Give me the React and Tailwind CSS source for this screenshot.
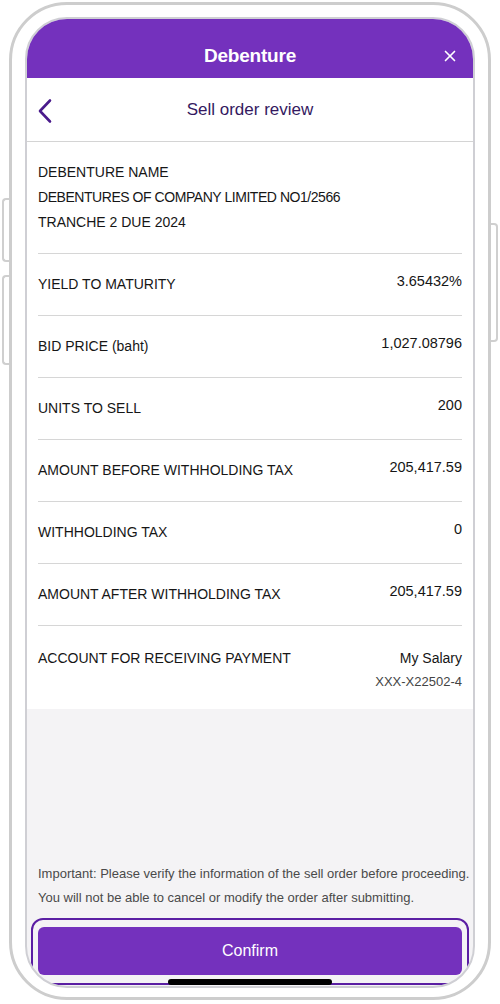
import { X } from 'lucide-react';

const rows = [
  { label: 'YIELD TO MATURITY', value: '3.65432%' },
  { label: 'BID PRICE (baht)', value: '1,027.08796' },
  { label: 'UNITS TO SELL', value: '200' },
  { label: 'AMOUNT BEFORE WITHHOLDING TAX', value: '205,417.59' },
  { label: 'WITHHOLDING TAX', value: '0' },
  { label: 'AMOUNT AFTER WITHHOLDING TAX', value: '205,417.59' },
];

const App = () => {
  return (
    <div className="w-[500px] h-[1004px] bg-white relative overflow-hidden font-['Liberation_Sans',Arial,sans-serif] text-[#161616]">
      {/* side buttons */}
      <div className="absolute left-[2px] top-[198px] w-[10px] h-[64px] border-2 border-r-0 border-[#cfcfcf] rounded-l-[4px] bg-white" />
      <div className="absolute left-[2px] top-[275px] w-[10px] h-[90px] border-2 border-r-0 border-[#cfcfcf] rounded-l-[4px] bg-white" />
      <div className="absolute right-[2px] top-[223px] w-[10px] h-[119px] border-2 border-l-0 border-[#cfcfcf] rounded-r-[4px] bg-white" />

      {/* phone frame */}
      <div className="relative mx-[9px] mt-[2px] h-[998px] border-[3px] border-[#cdcdcd] rounded-[58px] bg-white px-[13px] pt-[12px] pb-[9px]">
        <div className="h-full border-2 border-[#cfcfd4] rounded-[42px] overflow-hidden flex flex-col bg-[#f4f3f5]">
          {/* top bar */}
          <div className="h-[59px] shrink-0 bg-[#7431bd] flex items-end justify-center pb-[10px] relative">
            <span className="text-white text-[19px] leading-[24px] font-bold tracking-[-0.2px]">Debenture</span>
            <X className="absolute right-[14px] bottom-[13px] w-[18px] h-[18px] text-white" strokeWidth={2.2} />
          </div>

          {/* sub header */}
          <div className="h-[64px] shrink-0 bg-white border-b border-[#d4d4d4] flex items-center justify-center relative">
            <svg className="absolute left-[10px] top-[20px]" width="16" height="26" viewBox="0 0 16 26" fill="none" stroke="#4a1b8c" strokeWidth="2.6" strokeLinecap="round" strokeLinejoin="round">
              <polyline points="13,2.5 3,13 13,23.5" />
            </svg>
            <span className="text-[17px] text-[#34195f]">Sell order review</span>
          </div>

          {/* details */}
          <div className="bg-white px-[11px] shrink-0">
            <div className="pt-[18px] pb-[18px] text-[14px] leading-[25px] border-b border-[#d6d6d6]">
              <div>DEBENTURE NAME</div>
              <div className="tracking-[-0.45px]">DEBENTURES OF COMPANY LIMITED NO1/2566</div>
              <div>TRANCHE 2 DUE 2024</div>
            </div>
            {rows.map((r) => (
              <div key={r.label} className="h-[62px] flex justify-between items-center border-b border-[#d6d6d6] text-[14px]">
                <span className="mb-[1px]">{r.label}</span>
                <span className="mb-[5px] text-[14.5px]">{r.value}</span>
              </div>
            ))}
            <div className="pt-[22px] pb-[17px] flex justify-between text-[14px] leading-[20px]">
              <span>ACCOUNT FOR RECEIVING PAYMENT</span>
              <div className="flex flex-col items-end gap-[4px]">
                <span>My Salary</span>
                <span className="text-[13px] text-[#444]">XXX-X22502-4</span>
              </div>
            </div>
          </div>

          {/* bottom */}
          <div className="flex-1 flex flex-col justify-end relative">
            <div className="pl-[11px] text-[13px] leading-[24px] text-[#4a4a4a] whitespace-nowrap mb-[8px]">
              <div>Important: Please verify the information of the sell order before proceeding.</div>
              <div>You will not be able to cancel or modify the order after submitting.</div>
            </div>
            <div className="mx-[4px] mb-[1px] border-2 border-[#5b1fa3] rounded-[12px] pt-[7px] pb-[8px] px-[5px]">
              <button className="w-full h-[48px] rounded-[6px] bg-[#7431bd] text-white text-[16px] font-medium">
                Confirm
              </button>
            </div>
            <div className="absolute left-[141px] bottom-[1px] w-[164px] h-[6px] rounded-full bg-black" />
          </div>
        </div>
      </div>
    </div>
  );
};

export default App;
